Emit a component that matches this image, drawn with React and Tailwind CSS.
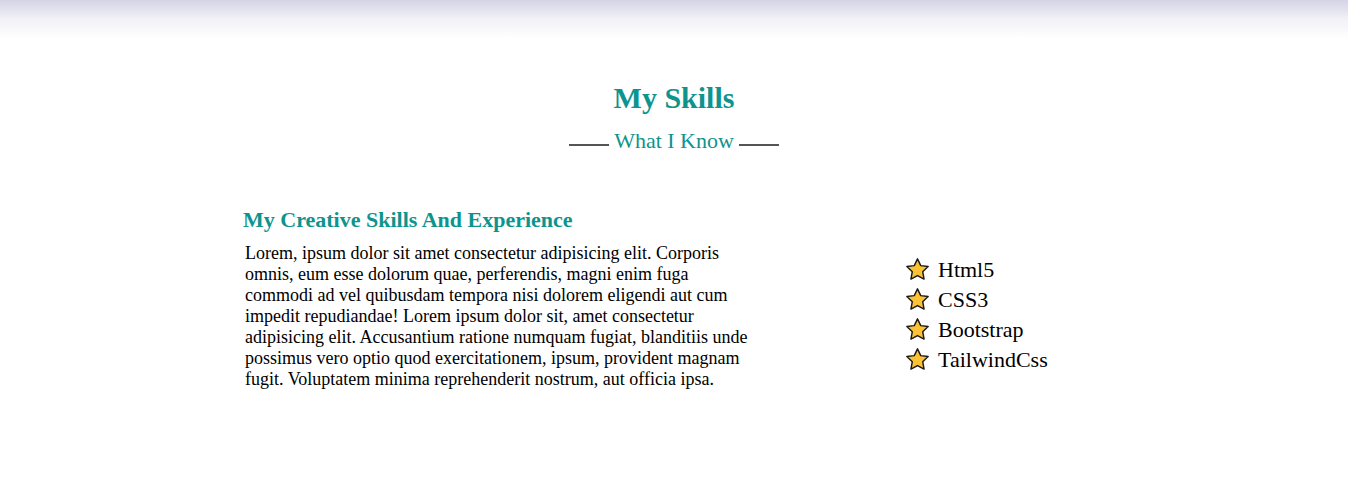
function Star() {
  return (
    <svg width="25" height="25" viewBox="0 0 24 24" className="shrink-0">
      <path
        d="M12 1.8l3.1 6.5 7.1.9-5.2 4.9 1.3 7.1L12 17.8l-6.3 3.4 1.3-7.1-5.2-4.9 7.1-.9z"
        fill="#fcc235"
        stroke="#1a1a1a"
        strokeWidth="1.4"
        strokeLinejoin="round"
      />
    </svg>
  );
}

export default function App() {
  const skills = ["Html5", "CSS3", "Bootstrap", "TailwindCss"];

  return (
    <div className="min-h-[500px] bg-white font-['Liberation_Serif',serif] text-black">
      {/* shadow left by the nav bar above */}
      <div className="h-[38px] bg-gradient-to-b from-[#d4d4e6] via-[#f1f1f7] to-white" />

      <section className="pt-[42px]">
        <h1 className="text-center text-[30px] font-bold leading-[36px] text-[#0d948e]">
          My Skills
        </h1>
        <div className="mt-[12px] flex items-center justify-center gap-[5px]">
          <span className="mt-[8px] h-[2px] w-[40px] bg-[#555]" />
          <h2 className="text-[22px] leading-[26px] text-[#0d948e]">What I Know</h2>
          <span className="mt-[8px] h-[2px] w-[40px] bg-[#555]" />
        </div>

        <div className="mx-auto mt-[52px] flex w-[862px] items-start">
          <div className="w-[512px]">
            <h3 className="text-[22px] font-bold leading-[28px] text-[#0d948e]">
              My Creative Skills And Experience
            </h3>
            <p className="mt-[9px] w-[508px] pl-[2px] text-[18px] leading-[21px]">
              Lorem, ipsum dolor sit amet consectetur adipisicing elit. Corporis omnis, eum esse
              dolorum quae, perferendis, magni enim fuga commodi ad vel quibusdam tempora nisi
              dolorem eligendi aut cum impedit repudiandae! Lorem ipsum dolor sit, amet consectetur
              adipisicing elit. Accusantium ratione numquam fugiat, blanditiis unde possimus vero
              optio quod exercitationem, ipsum, provident magnam fugit. Voluptatem minima
              reprehenderit nostrum, aut officia ipsa.
            </p>
          </div>

          <ul className="ml-[150px] mt-[48px] flex flex-col">
            {skills.map((s) => (
              <li key={s} className="flex h-[30px] items-center gap-[8px] text-[22px]">
                <Star />
                <span>{s}</span>
              </li>
            ))}
          </ul>
        </div>
      </section>
    </div>
  );
}
